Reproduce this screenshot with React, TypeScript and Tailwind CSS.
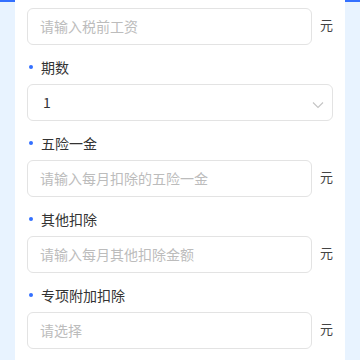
import React from "react";

const font = { fontFamily: '"Noto Sans CJK SC", "Noto Sans", sans-serif' };

const Label = ({ text }: { text: string }) => (
  <div className="mt-3 mb-[7px] flex h-5 items-center">
    <span className="ml-[2px] h-1 w-1 rounded-full bg-[#3370ff]" />
    <span className="ml-[8px] text-[14px] leading-5 text-[#333]">{text}</span>
  </div>
);

const InputRow = ({ placeholder }: { placeholder: string }) => (
  <div className="flex items-center">
    <div className="flex h-[37px] flex-1 items-center rounded-[6px] border border-[#e3e3e3] px-3">
      <span className="text-[14px] text-[#bcbcbc]">{placeholder}</span>
    </div>
    <span className="ml-[8px] w-[13px] pb-[4px] text-[13px] leading-none text-[#444]">元</span>
  </div>
);

export default function App() {
  return (
    <div className="min-h-[360px] border-t-2 border-[#3370ff] bg-[#e8f3ff] px-[15px]" style={font}>
      <div className="-mt-0.5 min-h-[362px] bg-white px-3 pt-2">
        <InputRow placeholder="请输入税前工资" />
        <Label text="期数" />
        <div className="flex h-[37px] items-center justify-between rounded-[6px] border border-[#e3e3e3] pl-[15px] pr-[8px]">
          <span className="text-[14px] text-[#333]">1</span>
          <svg width="12" height="8" viewBox="0 0 12 8" fill="none" className="mt-1">
            <path d="M1 1.5 6 6.5 11 1.5" stroke="#c4c4c4" strokeWidth="1.1" />
          </svg>
        </div>
        <Label text="五险一金" />
        <InputRow placeholder="请输入每月扣除的五险一金" />
        <Label text="其他扣除" />
        <InputRow placeholder="请输入每月其他扣除金额" />
        <Label text="专项附加扣除" />
        <InputRow placeholder="请选择" />
      </div>
    </div>
  );
}
